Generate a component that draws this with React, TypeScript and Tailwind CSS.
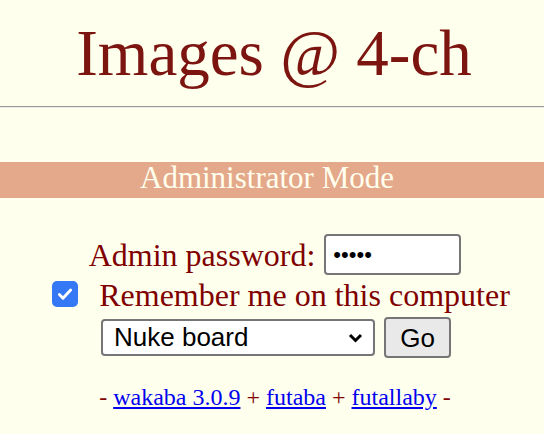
export default function App() {
  return (
    <div className="min-h-[434px] w-full bg-[#ffffee] text-[#800000] font-['Liberation_Serif',serif]">
      <div className="h-[106px] pt-[20px]">
        <h1 className="pl-[4px] text-center text-[65px] leading-[66px] font-normal text-[#7c1410]">Images @ 4-ch</h1>
      </div>
      <div className="h-px bg-[#9a9a9a]" />
      <div className="h-px bg-[#ebebeb]" />

      <div className="mt-[54px] h-[36px] bg-[#e4a98a] pr-[10px] text-center text-[31px] leading-[32px] text-[#ffffee]">
        Administrator Mode
      </div>

      <form className="mt-[36px] flex flex-col items-center">
        <div className="flex h-[41px] items-center gap-[9px] pl-[6px]">
          <span className="text-[32px] leading-[32px]">Admin password:</span>
          <input
            type="password"
            readOnly
            defaultValue="admin"
            className="h-[41px] w-[137px] rounded-[4px] border-2 border-[#767676] bg-white px-[7px] font-['Liberation_Sans',sans-serif] text-[22px] text-black outline-none"
          />
        </div>

        <div className="flex h-[42px] items-start pl-[18px]">
          <span className="mt-[6px] flex h-[26px] w-[26px] items-center justify-center rounded-[5px] bg-[#3478f6]">
            <svg width="18" height="18" viewBox="0 0 16 16" fill="none">
              <path d="M3 8.5l3.2 3.2L13 4.5" stroke="white" strokeWidth="2.6" strokeLinecap="round" strokeLinejoin="round" />
            </svg>
          </span>
          <span className="ml-[21px] mt-[4px] text-[32px] leading-[32px]">Remember me on this computer</span>
        </div>

        <div className="flex h-[41px] items-center gap-[9px] pl-[8px]">
          <div className="flex h-[37px] w-[274px] items-center justify-between rounded-[4px] border-2 border-[#767676] bg-white pl-[11px] pr-[10px] font-['Liberation_Sans',sans-serif] text-[26px] text-black">
            <span>Nuke board</span>
            <svg width="15" height="10" viewBox="0 0 15 10" fill="none">
              <path d="M2 2l5.5 5.5L13 2" stroke="black" strokeWidth="3" />
            </svg>
          </div>
          <button
            type="button"
            className="h-[41px] w-[67px] rounded-[4px] border-2 border-[#767676] bg-[#e9e9e9] font-['Liberation_Sans',sans-serif] text-[26px] text-black"
          >
            Go
          </button>
        </div>
      </form>

      <div className="mt-[27px] pl-[6px] text-center text-[24px] leading-[24px]">
        - <a href="#" className="text-[#0000ee] underline">wakaba 3.0.9</a> +{" "}
        <a href="#" className="text-[#0000ee] underline">futaba</a> +{" "}
        <a href="#" className="text-[#0000ee] underline">futallaby</a> -
      </div>
    </div>
  );
}
